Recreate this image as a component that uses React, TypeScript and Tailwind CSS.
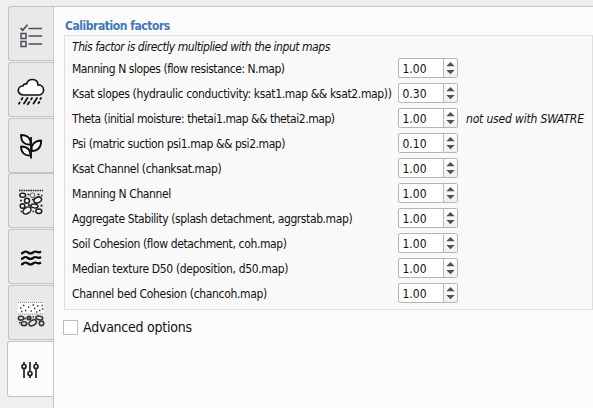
import React from "react";

type Row = { label: string; value: string; spacing: string; note?: string };

const rows: Row[] = [
  { label: "Manning N slopes (flow resistance: N.map)", value: "1.00", spacing: "tracking-[-0.45px]" },
  { label: "Ksat slopes (hydraulic conductivity: ksat1.map && ksat2.map))", value: "0.30", spacing: "tracking-[-0.35px]" },
  { label: "Theta (initial moisture: thetai1.map && thetai2.map)", value: "1.00", spacing: "tracking-[-0.45px]", note: "not used with SWATRE" },
  { label: "Psi (matric suction psi1.map && psi2.map)", value: "0.10", spacing: "tracking-[-0.43px]" },
  { label: "Ksat Channel (chanksat.map)", value: "1.00", spacing: "tracking-[-0.38px]" },
  { label: "Manning N Channel", value: "1.00", spacing: "tracking-[-0.4px]" },
  { label: "Aggregate Stability (splash detachment, aggrstab.map)", value: "1.00", spacing: "tracking-[-0.4px]" },
  { label: "Soil Cohesion (flow detachment, coh.map)", value: "1.00", spacing: "tracking-[-0.36px]" },
  { label: "Median texture D50 (deposition, d50.map)", value: "1.00", spacing: "tracking-[-0.35px]" },
  { label: "Channel bed Cohesion (chancoh.map)", value: "1.00", spacing: "tracking-[-0.33px]" },
];

const ChecklistIcon = () => (
  <svg width="24" height="24" viewBox="0 0 24 24" fill="none" stroke="#4a4b55" strokeWidth="1.5" className="mt-[5px]">
    <path d="M1.500 4l2.200 2.200L8.500 .8M9.500 4.500h13.500M9.500 12h13.500M9.500 20h13.500" strokeWidth="1.700" />
    <rect x="2" y="9.500" width="5" height="5" />
    <rect x="2" y="17.500" width="5" height="5" />
  </svg>
);

const RainIcon = () => (
  <svg width="28" height="28" viewBox="0 0 28 28" fill="none" stroke="#151515" strokeWidth="1.700" strokeLinecap="round" className="mt-[5px]">
    <path fill="#fff" d="M6.500 17C3.500 17 1.300 15 1.300 12.400C1.300 9.900 3.300 8 5.900 8C6.300 6.500 7.800 5.500 9.500 6C10.300 3.200 12.500 1.500 15.300 1.500C18.500 1.500 20.800 3.700 21 6.900C24.200 6.900 26.600 9 26.600 11.900C26.600 14.900 24.300 17 21.200 17Z" />
    <path d="M5.500 20l-1 1.500M10.500 20l-3.500 5.500M15 20l-1 1.500M20 20l-3.500 5.500M2.700 24.500l-.8 1.200M12.300 24l-1.600 2.300M22.300 24l-.8 1.200M24 20l-.6 1" strokeWidth="1.800" />
  </svg>
);

const PlantIcon = () => (
  <svg width="24" height="26" viewBox="0 0 24 26" fill="#f7f7f7" stroke="#0d0d0d" strokeWidth="1.800" strokeLinejoin="round" className="mt-[2px]">
    <path d="M12 4v21.500" fill="none" />
    <path d="M11.500 11.500C5 12 2 8.500 2 2C8.500 2 12 5 11.500 11.500Z" />
    <path d="M11.500 22.500C5.500 23 2 19.500 2 13.500C8.500 13.500 11.500 16.500 11.500 22.500Z" />
    <path d="M12.500 18C12 11.500 15.500 7.800 22.200 7.500C22.200 14 19 18 12.500 18Z" />
  </svg>
);

const SoilIcon = () => (
  <svg width="26" height="26" viewBox="0 0 26 26" fill="#f4f4f4" stroke="#1d1d1d" strokeWidth="1.500" className="mt-[3px]">
    <path d="M1 1.500h24" strokeDasharray="1.500 .8" strokeWidth="1.500" />
    <ellipse cx="4.700" cy="6.200" rx="2.900" ry="2" />
    <circle cx="14.500" cy="6.200" r="2.200" stroke="#777" strokeWidth="1.200" />
    <ellipse cx="19.700" cy="11" rx="4" ry="2.700" transform="rotate(-25 19.700 11)" />
    <circle cx="9" cy="11.700" r="2.500" />
    <circle cx="4.500" cy="17" r="2.300" />
    <ellipse cx="16.500" cy="17" rx="3.600" ry="1.900" transform="rotate(10 16.500 17)" />
    <ellipse cx="9" cy="21.500" rx="4.400" ry="3" transform="rotate(-35 9 21.500)" />
    <ellipse cx="20.800" cy="22.300" rx="3" ry="2.200" />
    <path d="M2 11.500h2M9.500 5.500h2M14 10.500h1.500M19.500 5.500h2M23 6.500h1.500M10 16.200h2M22.500 16.700h2M14.500 22.500h1.600M2.500 22.500h1.500" strokeWidth="1.700" />
  </svg>
);

const WavesIcon = () => (
  <svg width="22" height="16" viewBox="0 0 22 16" fill="none" stroke="#080808" strokeWidth="2.200" className="mt-[3px]">
    <path d="M1 3.500C3.500 3.500 3.500 1.500 5.500 1.500S8.500 3.500 10.500 3.500S13.500 1.500 15.500 1.500S18 3.500 21 1.500" />
    <path d="M1 9C3.500 9 3.500 7 5.500 7S8.500 9 10.500 9S13.500 7 15.500 7S18 9 21 7" />
    <path d="M1 14.500C3.500 14.500 3.500 12.500 5.500 12.500S8.500 14.500 10.500 14.500S13.500 12.500 15.500 12.500S18 14.500 21 12.500" />
  </svg>
);

const SedimentIcon = () => (
  <svg width="28" height="26" viewBox="0 0 28 26" fill="#e8e8e8" stroke="#333" strokeWidth="1.600" className="mt-[3px]">
    <path d="M1 1h26v12H1z" fill="#fff" stroke="none" />
    <path d="M1 1.500h26M1 13h26" stroke="#888" strokeWidth=".9" strokeDasharray="1.200 .8" />
    <path d="M3 7h1.400M6 4.500h1.400M8 9.500h1.400M11 6h1.400M13.500 10h1.400M15.500 4h1.400M17 7.500h1.400M20 5h1.400M22 9.500h1.400M24.500 4.500h1.400M25 8h1.400M4 10.500h1.400M19 11h1.400" strokeWidth="1.400" />
    <ellipse cx="4" cy="17.200" rx="2.600" ry="1.900" />
    <circle cx="12" cy="17" r="1.800" fill="#777" />
    <ellipse cx="22.300" cy="17" rx="3.500" ry="1.800" transform="rotate(10 22.300 17)" />
    <ellipse cx="7" cy="22.700" rx="2.800" ry="1.900" />
    <ellipse cx="15.700" cy="21.800" rx="4" ry="2.500" transform="rotate(-30 15.700 21.800)" />
    <ellipse cx="24.500" cy="22.300" rx="2.200" ry="2.300" />
    <path d="M8 16.500v2M15.500 16h1.500M2 21.500h1.500" />
  </svg>
);

const SlidersIcon = () => (
  <svg width="18" height="18" viewBox="0 0 18 18" fill="#fff" stroke="#242424" strokeWidth="1.700" className="mr-[2px] mt-[3px]">
    <path d="M3 1v16M9 1v16M15 1v16" />
    <circle cx="3" cy="5.500" r="2" />
    <circle cx="9" cy="12.500" r="2" />
    <circle cx="15" cy="5.500" r="2" />
  </svg>
);

const tabs = [ChecklistIcon, RainIcon, PlantIcon, SoilIcon, WavesIcon, SedimentIcon];

function SpinBox({ value }: { value: string }) {
  return (
    <div className="mt-[2px] flex h-5 w-[60px] shrink-0 self-start overflow-hidden rounded-[2px] border border-[#b5b5b5] bg-white">
      <span className="w-[44px] pl-[3.5px] pt-px text-[12px] leading-[18px] text-[#111]">{value}</span>
      <div className="flex flex-1 items-center justify-center border-l border-[#b9b9b9] bg-gradient-to-b from-white to-[#f0f0f0]">
        <svg width="9" height="14" viewBox="0 0 9 14" fill="#515151">
          <path d="M.3 5.200L4.500 1l4.200 4.200zM.3 9L4.500 13.200L8.700 9z" />
        </svg>
      </div>
    </div>
  );
}

export default function App() {
  return (
    <div className="flex h-[408px] w-[593px] overflow-hidden bg-[#efefef] pt-[6px] font-['DejaVu_Sans_Condensed','DejaVu_Sans',sans-serif] text-[12px] text-[#111] [font-stretch:condensed]">
      <nav className="flex w-[53px] shrink-0 flex-col pl-[8px]">
        {tabs.map((Icon, i) => (
          <div
            key={i}
            className="mb-[0.8px] flex h-[55px] w-[45px] shrink-0 items-center justify-center rounded-l-[3px] border border-r-0 border-[#c3c3c3] bg-[#e9e9e9]"
          >
            <Icon />
          </div>
        ))}
        <div className="-ml-px flex h-[56px] w-[47px] shrink-0 items-center justify-center rounded-l-[3px] border border-r-0 border-[#c3c3c3] bg-[#fcfcfc]">
          <SlidersIcon />
        </div>
      </nav>
      <main className="flex min-w-0 flex-1 flex-col border-l border-t border-[#c6c6c6] bg-[#fcfcfc] pl-[10px]">
        <h1 className="mt-[10px] h-[18px] whitespace-nowrap pl-px text-[12px] font-bold leading-[18px] tracking-[-0.45px] text-[#3f78b5]">Calibration factors</h1>
        <section className="h-[275px] border border-[#dedede] bg-[#f9f9f9] pl-[7px]">
          <p className="mt-[3px] h-[17px] whitespace-nowrap italic leading-[17px] tracking-[-0.45px]">This factor is directly multiplied with the input maps</p>
          {rows.map((r) => (
            <div key={r.label} className="flex h-[25px] items-center whitespace-nowrap">
              <span className={`w-[326px] shrink-0 ${r.spacing}`}>{r.label}</span>
              <SpinBox value={r.value} />
              {r.note && <span className="pl-[8px] italic tracking-[-0.17px]">{r.note}</span>}
            </div>
          ))}
        </section>
        <label className="mt-[8px] flex items-center gap-[5px] whitespace-nowrap text-[14px] leading-[18px] tracking-[-0.23px]">
          <span className="-ml-px h-[15px] w-[15px] border border-[#bdbdbd] bg-white" />
          Advanced options
        </label>
      </main>
    </div>
  );
}
